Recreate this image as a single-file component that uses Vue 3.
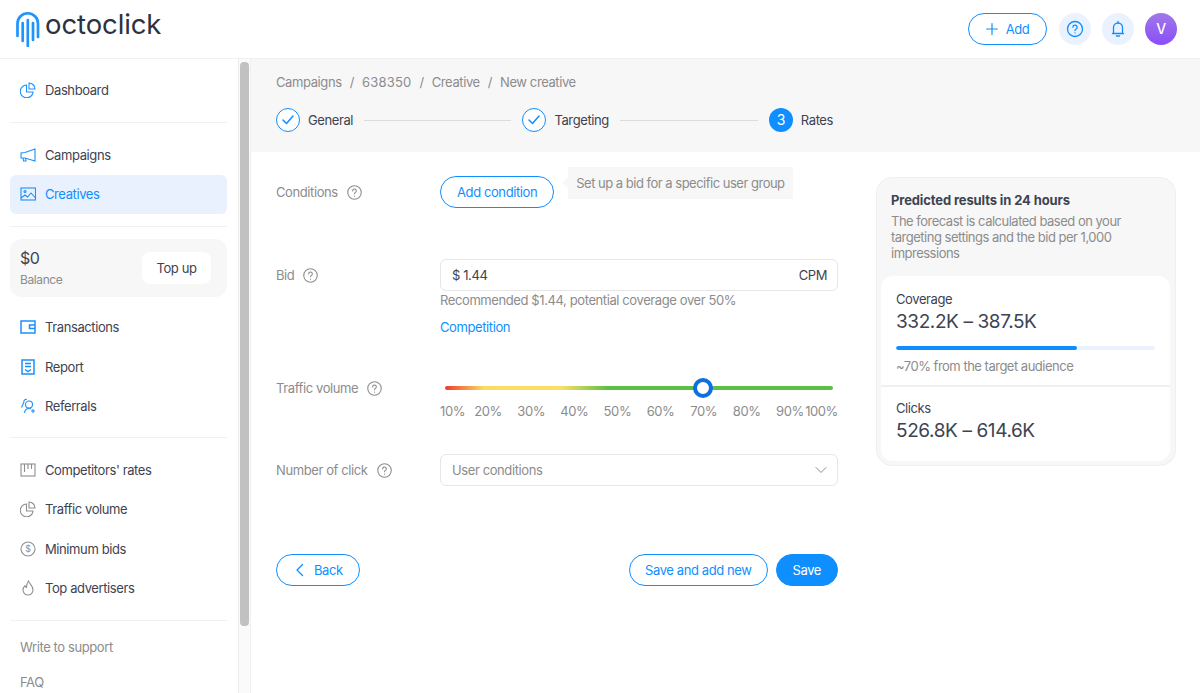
<script setup>
const marks = ['10%', '20%', '30%', '40%', '50%', '60%', '70%', '80%', '90%', '100%']
</script>

<template>
  <div class="page">
    <header class="topbar">
      <div class="logo">
        <svg width="26" height="36" viewBox="0 0 26 36" fill="none" stroke="#1f93ff" stroke-width="2.7" stroke-linecap="round">
          <path d="M2.5 25V12.500a10.250 10.250 0 0 1 20.500 0V26" />
          <path d="M7.700 12v18" />
          <path d="M12.800 9v26" />
          <path d="M18 12v17" />
        </svg>
        <span class="logo-text">octoclick</span>
      </div>
      <div class="top-actions">
        <button class="btn btn-outline add-btn">
          <svg width="12" height="12" viewBox="0 0 12 12" fill="none" stroke="currentColor" stroke-width="1.2" stroke-linecap="round"><path d="M6 .6v10.800M.6 6h10.800" /></svg>
          Add
        </button>
        <span class="round-btn">
          <svg width="18" height="18" viewBox="0 0 18 18" fill="none" stroke="#0f8fff" stroke-width="1.3" stroke-linecap="round"><circle cx="9" cy="9" r="7.500" /><path d="M6.900 7.200a2.100 2.100 0 1 1 3.200 1.800c-.7.400-1.100.8-1.100 1.600" /><path d="M9 12.800v.1" /></svg>
        </span>
        <span class="round-btn">
          <svg width="18" height="18" viewBox="0 0 18 18" fill="none" stroke="#0f8fff" stroke-width="1.3" stroke-linecap="round" stroke-linejoin="round"><path d="M4.500 13.500V7.500a4.500 4.500 0 0 1 9 0v6M3.500 13.500h11" /><path d="M9 3V1.500M7.500 16h3" /></svg>
        </span>
        <span class="avatar">V</span>
      </div>
    </header>

    <div class="body">
      <aside class="sidebar">
        <nav class="nav">
          <a class="nav-item">
            <svg class="ico" viewBox="0 0 16 16"><path d="M6.500 3a6.400 6.400 0 1 0 6.600 7H6.500z" /><path d="M9 1a6 6 0 0 1 6 6H9z" /></svg>
            Dashboard
          </a>
          <div class="divider top"></div>
          <a class="nav-item">
            <svg class="ico" viewBox="0 0 16 16"><path d="M15 2v12L5 11H1V6l4-.5z" /><path d="M3 11l.6 3H6l-.5-2.600" /></svg>
            Campaigns
          </a>
          <a class="nav-item active">
            <svg class="ico" viewBox="0 0 16 16"><rect x="1" y="2" width="14.500" height="12" /><circle cx="5" cy="5.500" r="1" /><path d="M1 12l4-3 2.500 2 3.500-4 4.500 5" /></svg>
            Creatives
          </a>
          <div class="divider"></div>

          <div class="balance">
            <div>
              <div class="balance-sum">$0</div>
              <div class="balance-label">Balance</div>
            </div>
            <button class="topup">Top up</button>
          </div>

          <a class="nav-item">
            <svg class="ico thick" viewBox="0 0 16 16"><rect x="1" y="2" width="14" height="12" /><path d="M15 6H9.500v3.500H15" /></svg>
            Transactions
          </a>
          <a class="nav-item">
            <svg class="ico thick" viewBox="0 0 16 16"><path d="M2 1h12v14H2z" /><path d="M5 4.500h6M5 7.500h6M5 10.500l3 2 3-2" /></svg>
            Report
          </a>
          <a class="nav-item">
            <svg class="ico" viewBox="0 0 16 16"><circle cx="9" cy="6.500" r="3.500" /><path d="M4.500 15c.3-2.800 2-4.500 4.500-4.500 1 0 1.700.2 2.300.6M7 1.200C4.700 1 3.500 2.500 3.800 4.500L1.500 9.500M13 11v4M11 13h4" /></svg>
            Referrals
          </a>
          <div class="divider short"></div>
          <a class="nav-item">
            <svg class="ico gray" viewBox="0 0 16 16"><rect x="1" y="2" width="14" height="12" /><path d="M4.500 2v8M8 2v5M11.500 2v5" /></svg>
            Competitors' rates
          </a>
          <a class="nav-item">
            <svg class="ico gray" viewBox="0 0 16 16"><path d="M6.500 3a6.400 6.400 0 1 0 6.600 7H6.500z" /><path d="M9 1a6 6 0 0 1 6 6H9z" /></svg>
            Traffic volume
          </a>
          <a class="nav-item">
            <svg class="ico gray" viewBox="0 0 16 16"><circle cx="8" cy="8" r="7" /><text x="8" y="11.200" text-anchor="middle" class="ico-dollar">$</text></svg>
            Minimum bids
          </a>
          <a class="nav-item">
            <svg class="ico gray" viewBox="0 0 16 16"><path d="M8.500 1c.5 2.500 4.500 4.500 4.500 9a5 5 0 0 1-10 0c0-2 1-3.300 2-4.300.3 1 .8 1.600 1.500 1.800C6.500 5 7 3 8.500 1z" /></svg>
            Top advertisers
          </a>
          <div class="divider"></div>
          <a class="side-link">Write to support</a>
          <a class="side-link">FAQ</a>
        </nav>
        <div class="scrolltrack"><div class="scrollthumb"></div></div>
      </aside>

      <main class="main">
        <section class="crumbs-bar">
          <div class="crumbs">
            <span>Campaigns</span><i>/</i><span class="crumb-id">638350</span><i>/</i><span>Creative</span><i>/</i><span>New creative</span>
          </div>
          <div class="steps">
            <div class="step">
              <span class="step-done"><svg width="12" height="10" viewBox="0 0 12 10" fill="none" stroke="#0f8fff" stroke-width="1.500" stroke-linecap="round" stroke-linejoin="round"><path d="M1 5l3.500 3.500L11 1" /></svg></span>
              <span class="step-name">General</span>
              <span class="step-line"></span>
            </div>
            <div class="step">
              <span class="step-done"><svg width="12" height="10" viewBox="0 0 12 10" fill="none" stroke="#0f8fff" stroke-width="1.500" stroke-linecap="round" stroke-linejoin="round"><path d="M1 5l3.500 3.500L11 1" /></svg></span>
              <span class="step-name">Targeting</span>
              <span class="step-line"></span>
            </div>
            <div class="step last">
              <span class="step-now">3</span>
              <span class="step-name">Rates</span>
            </div>
          </div>
        </section>

        <section class="content">
          <div class="form">
            <div class="row">
              <div class="label">Conditions <svg class="help" viewBox="0 0 14 14"><circle cx="7" cy="7" r="6.300" /><path d="M5.300 5.500a1.700 1.700 0 1 1 2.600 1.400c-.6.400-.9.700-.9 1.300M7 10.300v.1" /></svg></div>
              <div class="field">
                <button class="btn btn-outline">Add condition</button>
                <div class="tip">Set up a bid for a specific user group</div>
              </div>
            </div>

            <div class="row bid-row">
              <div class="label">Bid <svg class="help" viewBox="0 0 14 14"><circle cx="7" cy="7" r="6.300" /><path d="M5.300 5.500a1.700 1.700 0 1 1 2.600 1.400c-.6.400-.9.700-.9 1.300M7 10.300v.1" /></svg></div>
              <div class="field column">
                <div class="input">
                  <span>$ 1.44</span>
                  <span>CPM</span>
                </div>
                <div class="hint">Recommended $1.44, potential coverage over 50%</div>
                <a class="link">Competition</a>
              </div>
            </div>

            <div class="row traffic-row">
              <div class="label">Traffic volume <svg class="help" viewBox="0 0 14 14"><circle cx="7" cy="7" r="6.300" /><path d="M5.300 5.500a1.700 1.700 0 1 1 2.600 1.400c-.6.400-.9.700-.9 1.300M7 10.300v.1" /></svg></div>
              <div class="field column">
                <div class="slider">
                  <div class="track"><span class="thumb"></span></div>
                </div>
                <div class="marks">
                  <span v-for="m in marks" :key="m" class="mark"><span>{{ m }}</span></span>
                </div>
              </div>
            </div>

            <div class="row select-row">
              <div class="label">Number of click <svg class="help" viewBox="0 0 14 14"><circle cx="7" cy="7" r="6.300" /><path d="M5.300 5.500a1.700 1.700 0 1 1 2.600 1.400c-.6.400-.9.700-.9 1.300M7 10.300v.1" /></svg></div>
              <div class="field column">
                <div class="input placeholder">
                  <span>User conditions</span>
                  <svg width="12" height="8" viewBox="0 0 12 8" fill="none" stroke="#8c8c8c" stroke-width="1" stroke-linecap="round" stroke-linejoin="round"><path d="M1 1.500l5 5 5-5" /></svg>
                </div>
              </div>
            </div>

            <div class="actions">
              <button class="btn btn-outline back">
                <svg width="9" height="14" viewBox="0 0 9 14" fill="none" stroke="currentColor" stroke-width="1.300" stroke-linecap="round" stroke-linejoin="round"><path d="M7.500 1.500L2 7l5.500 5.500" /></svg>
                Back
              </button>
              <div class="actions-right">
                <button class="btn btn-outline save-new">Save and add new</button>
                <button class="btn btn-solid">Save</button>
              </div>
            </div>
          </div>

          <aside class="forecast">
            <div class="forecast-head">
              <div class="forecast-title">Predicted results in 24 hours</div>
              <div class="forecast-desc">The forecast is calculated based on your targeting settings and the bid per 1,000 impressions</div>
            </div>
            <div class="forecast-card">
              <div class="metric coverage">
                <div class="metric-name">Coverage</div>
                <div class="metric-value">332.2K – 387.5K</div>
                <div class="progress"><div class="progress-fill" :style="{ width: '70%' }"></div></div>
                <div class="metric-note">~70% from the target audience</div>
              </div>
              <div class="metric clicks">
                <div class="metric-name">Clicks</div>
                <div class="metric-value">526.8K – 614.6K</div>
              </div>
            </div>
          </aside>
        </section>
      </main>
    </div>
  </div>
</template>

<style scoped>
.page {
  height: 693px;
  display: flex;
  flex-direction: column;
  overflow: hidden;
  background: #fff;
  color: #3e4351;
  font-family: Inter, "Liberation Sans", sans-serif;
  font-size: 13px;
  line-height: 16px;
  letter-spacing: -0.4px;
}

.topbar {
  flex: none;
  height: 58px;
  box-sizing: content-box;
  border-bottom: 1px solid #f0f0f0;
  display: flex;
  align-items: center;
  justify-content: space-between;
  padding: 0 23px 0 15px;
}
.logo {
  display: flex;
  align-items: flex-start;
  height: 36px;
  gap: 4px;
}
.logo-text {
  margin-top: -5px;
  font-size: 27.5px;
  font-weight: 400;
  line-height: 36px;
  letter-spacing: -0.1px;
  color: #2c3240;
}
.top-actions {
  display: flex;
  align-items: center;
  gap: 11px;
}
.round-btn,
.avatar {
  width: 32px;
  height: 32px;
  border-radius: 50%;
  display: flex;
  align-items: center;
  justify-content: center;
}
.round-btn {
  background: #e9f2fe;
}
.avatar {
  background: linear-gradient(180deg, #a079e6, #8a4dfb);
  color: #fff;
  font-weight: 500;
  font-size: 14px;
}

.btn {
  height: 32px;
  border-radius: 16px;
  font: inherit;
  letter-spacing: inherit;
  padding: 0 16px;
  display: inline-flex;
  align-items: center;
  justify-content: center;
  white-space: nowrap;
}
.btn-outline {
  background: #fff;
  color: #0f8fff;
  border: 1px solid #0f8fff;
}
.btn-solid {
  background: #0f8fff;
  color: #fff;
  border: 1px solid #0f8fff;
}
.add-btn {
  width: 79px;
  gap: 8px;
  padding: 0;
  margin-right: 1px;
}

.body {
  flex: 1;
  display: flex;
  min-height: 0;
}

.sidebar {
  flex: none;
  width: 251px;
  display: flex;
}
.nav {
  flex: none;
  width: 238px;
  box-sizing: border-box;
  padding: 11px 11px 0 10px;
  display: flex;
  flex-direction: column;
}
.nav-item {
  flex: none;
  height: 39.5px;
  display: flex;
  align-items: center;
  gap: 9px;
  padding-left: 10px;
  border-radius: 6px;
}
.nav-item.active {
  height: 39px;
  background: #e8f1fd;
  color: #0f8fff;
}
.ico {
  width: 16px;
  height: 16px;
  flex: none;
  fill: none;
  stroke: #1c8ffb;
  stroke-width: 1.1;
}
.ico.thick {
  stroke-width: 1.5;
}
.ico.gray {
  stroke: #8f8f8f;
}
.ico-dollar {
  font-size: 9px;
  fill: #8f8f8f;
  stroke: none;
}
.divider {
  flex: none;
  height: 1px;
  background: #f0f0f0;
  margin: 12px 0;
}
.divider.top {
  margin-bottom: 12.7px;
}
.divider.short {
  margin-top: 11px;
}
.balance {
  flex: none;
  height: 58px;
  box-sizing: border-box;
  margin-bottom: 11px;
  padding: 0 16px 0 10px;
  background: #f7f7f7;
  border-radius: 12px;
  display: flex;
  align-items: center;
  justify-content: space-between;
}
.balance-sum {
  font-size: 16px;
  line-height: 20px;
}
.balance-label {
  margin-top: 4px;
  font-size: 12px;
  color: #8c8c8c;
}
.topup {
  width: 69px;
  height: 32px;
  border: 0;
  border-radius: 8px;
  background: #fff;
  color: #3e4351;
  font: inherit;
  letter-spacing: inherit;
}
.side-link {
  flex: none;
  color: #8c8c8c;
  height: 35px;
  display: flex;
  align-items: center;
  padding-left: 10px;
}
.divider + .side-link {
  margin-top: -4px;
}

.scrolltrack {
  flex: none;
  width: 13px;
  box-sizing: border-box;
  background: #fafafa;
  border-left: 1px solid #ececec;
  border-right: 1px solid #f0f0f0;
  padding: 3px 1px 0;
}
.scrollthumb {
  height: 564px;
  background: #c1c1c1;
  border-radius: 4px;
}

.main {
  flex: 1;
  min-width: 0;
}
.crumbs-bar {
  height: 93px;
  box-sizing: border-box;
  background: #f7f7f7;
  padding: 15px 25px 0;
}
.crumbs {
  display: flex;
  color: #8c8c8c;
}
.crumbs i {
  font-style: normal;
  margin: 0 8px;
}
.crumb-id {
  letter-spacing: 0.2px;
}
.steps {
  display: flex;
  width: 557px;
  margin-top: 15px;
  height: 30px;
}
.step {
  flex: 1;
  display: flex;
  align-items: center;
}
.step.last {
  flex: none;
}
.step-done,
.step-now {
  flex: none;
  width: 24px;
  height: 24px;
  box-sizing: border-box;
  border-radius: 50%;
  display: flex;
  align-items: center;
  justify-content: center;
}
.step-done {
  border: 1.5px solid #0f8fff;
  background: #fff;
}
.step-now {
  background: #0f8fff;
  color: #fff;
  font-size: 14px;
}
.step-name {
  margin-left: 8px;
}
.step-line {
  flex: 1;
  height: 1px;
  background: #dcdcdc;
  margin: 0 11px;
}

.content {
  display: flex;
  gap: 38px;
  padding: 0 24px 0 25px;
}
.form {
  flex: none;
  width: 562px;
  padding-top: 24px;
}
.row {
  display: flex;
}
.label {
  flex: none;
  width: 164px;
  height: 32px;
  display: flex;
  align-items: center;
  gap: 9px;
  color: #8c8c8c;
}
.help {
  width: 15px;
  height: 15px;
  fill: none;
  stroke: #8c8c8c;
  stroke-width: 1;
  stroke-linecap: round;
}
.field {
  flex: 1;
  display: flex;
  min-width: 0;
}
.field.column {
  flex-direction: column;
}
.tip {
  position: relative;
  align-self: flex-start;
  margin: -9px 0 0 14px;
  height: 32px;
  padding: 0 8px;
  display: flex;
  align-items: center;
  background: #f7f7f7;
  color: #8c8c8c;
  letter-spacing: -0.5px;
}
.tip::before {
  content: "";
  position: absolute;
  left: -4px;
  top: 12px;
  width: 8px;
  height: 8px;
  background: #f7f7f7;
  transform: rotate(45deg);
}
.bid-row {
  margin-top: 51px;
}
.input {
  height: 32px;
  box-sizing: border-box;
  border: 1px solid #e6e6e6;
  border-radius: 6px;
  padding: 0 10px 0 11px;
  display: flex;
  align-items: center;
  justify-content: space-between;
}
.input.placeholder {
  color: #8c8c8c;
}
.hint {
  margin-top: 1px;
  color: #8c8c8c;
}
.link {
  margin-top: 11px;
  color: #0f8fff;
}
.traffic-row {
  margin-top: 37px;
}
.slider {
  height: 31px;
  display: flex;
  align-items: center;
  padding: 0 5px;
}
.track {
  position: relative;
  flex: 1;
  height: 4px;
  border-radius: 2px;
  background: linear-gradient(90deg, #ee3b2e 0%, #f7dd62 10%, #f9df66 30%, #5dbf45 42%, #5dbf45 100%);
}
.thumb {
  position: absolute;
  left: 66.5%;
  top: 50%;
  width: 20px;
  height: 20px;
  box-sizing: border-box;
  margin: -10px 0 0 -10px;
  border: 4px solid #0f6fe0;
  border-radius: 50%;
  background: #fff;
}
.marks {
  display: flex;
  justify-content: space-between;
  padding: 0 5px;
  color: #8c8c8c;
}
.mark {
  width: 0;
  display: flex;
  justify-content: center;
  white-space: nowrap;
}
.mark:first-child {
  justify-content: flex-start;
}
.mark:first-child span {
  margin-left: -5px;
}
.mark:last-child {
  justify-content: flex-end;
}
.mark:last-child span {
  margin-right: -5px;
}
.select-row {
  margin-top: 35px;
}
.actions {
  margin-top: 68px;
  display: flex;
  justify-content: space-between;
}
.actions-right {
  display: flex;
  gap: 8px;
}
.save-new {
  padding: 0 15px;
}
.back {
  width: 84px;
  padding: 0 0 0 18px;
  justify-content: flex-start;
  gap: 10px;
}

.forecast {
  flex: none;
  width: 300px;
  height: 289px;
  box-sizing: border-box;
  margin-top: 25px;
  background: #f7f7f7;
  border: 1px solid #efefef;
  border-radius: 16px;
  padding: 0 5px 4px 4px;
  display: flex;
  flex-direction: column;
}
.forecast-head {
  padding: 14px 12px 15px 10px;
}
.forecast-title {
  font-weight: 700;
  letter-spacing: -0.12px;
}
.forecast-desc {
  margin-top: 5px;
  color: #8c8c8c;
  letter-spacing: -0.5px;
}
.forecast-card {
  flex: 1;
  background: #fff;
  border-radius: 12px;
}
.metric {
  padding: 15px 15px 0;
}
.coverage {
  height: 111px;
  box-sizing: border-box;
  border-bottom: 2px solid #f0f0f0;
}
.clicks {
  padding-top: 13px;
}
.metric-value {
  margin-top: 3px;
  font-size: 19px;
  line-height: 24px;
}
.progress {
  margin-top: 12px;
  height: 4px;
  border-radius: 2px;
  background: #e9f2fe;
  overflow: hidden;
}
.progress-fill {
  height: 100%;
  background: #0f8fff;
  border-radius: 2px;
}
.metric-note {
  margin-top: 8px;
  color: #8c8c8c;
  letter-spacing: -0.5px;
}
</style>

<style>
html, body {
  margin: 0;
  overflow: hidden;
}
</style>
